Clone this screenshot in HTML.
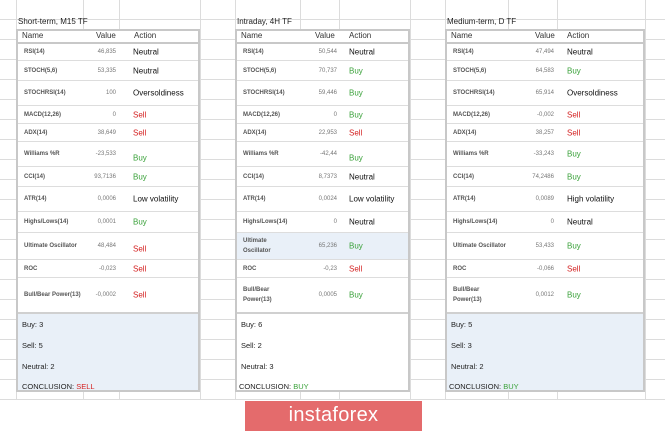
<!DOCTYPE html>
<html><head><meta charset="utf-8"><style>
body{margin:0;width:665px;height:432px;overflow:hidden;background:#fff;font-family:"Liberation Sans",sans-serif;position:relative}
.grid{position:absolute;left:0;top:0;width:665px;height:400px;background:repeating-linear-gradient(to bottom,transparent 0,transparent 19px,#dcdcdc 19px,#dcdcdc 20px)}
.v{position:absolute;top:0;height:400px;width:1px;background:#dcdcdc}
.p{position:absolute;top:29px;height:363px;background:#fff;border:2px solid #c8c8c8;box-sizing:border-box}
.t{position:absolute;font-size:8px;color:#222}
.h{position:absolute;left:0;right:0;top:0;height:11px;border-bottom:2px solid #c8c8c8;font-size:8px;color:#333}
.r{position:absolute;left:0;right:0;border-bottom:1px solid #ddd;font-size:6px;font-weight:bold;color:#555}
.r span{position:absolute;top:50%;transform:translateY(-50%)}
.val{font-weight:normal;color:#777;text-align:right}
.act{font-weight:normal;font-size:8px;color:#111}
.g{color:#3aa13a!important}.rd{color:#d42020!important}
.s{position:absolute;left:0;right:0;top:281px;bottom:0;font-size:7.5px;color:#222}
.s div{position:absolute;left:4px}
</style></head><body>
<div class="grid"></div>
<div class="v" style="left:16px"></div><div class="v" style="left:83px"></div><div class="v" style="left:119px"></div><div class="v" style="left:200px"></div><div class="v" style="left:235px"></div><div class="v" style="left:300px"></div><div class="v" style="left:339px"></div><div class="v" style="left:410px"></div><div class="v" style="left:445px"></div><div class="v" style="left:508px"></div><div class="v" style="left:557px"></div><div class="v" style="left:645px"></div>

<div class="t" style="left:18px;top:17px">Short-term, M15 TF</div>
<div class="t" style="left:237px;top:17px">Intraday, 4H TF</div>
<div class="t" style="left:447px;top:17px">Medium-term, D TF</div>

<!-- Panel 1 -->
<div class="p" style="left:16px;width:184px">
<div class="h"><span style="position:absolute;left:4px">Name</span><span style="position:absolute;left:78px">Value</span><span style="position:absolute;left:116px">Action</span></div>
<div class="r" style="top:12px;height:17px"><span style="left:6px">RSI(14)</span><span class="val" style="right:82px">46,835</span><span class="act" style="left:115px">Neutral</span></div>
<div class="r" style="top:30px;height:19px"><span style="left:6px">STOCH(5,6)</span><span class="val" style="right:82px">53,335</span><span class="act" style="left:115px">Neutral</span></div>
<div class="r" style="top:50px;height:24px"><span style="left:6px">STOCHRSI(14)</span><span class="val" style="right:82px">100</span><span class="act" style="left:115px">Oversoldiness</span></div>
<div class="r" style="top:75px;height:17px"><span style="left:6px">MACD(12,26)</span><span class="val" style="right:82px">0</span><span class="act rd" style="left:115px">Sell</span></div>
<div class="r" style="top:93px;height:17px"><span style="left:6px">ADX(14)</span><span class="val" style="right:82px">38,649</span><span class="act rd" style="left:115px">Sell</span></div>
<div class="r" style="top:111px;height:24px"><span style="left:6px">Williams %R</span><span class="val" style="right:82px">-23,533</span><span class="act g" style="left:115px;top:65%">Buy</span></div>
<div class="r" style="top:136px;height:19px"><span style="left:6px">CCI(14)</span><span class="val" style="right:82px">93,7136</span><span class="act g" style="left:115px">Buy</span></div>
<div class="r" style="top:156px;height:24px"><span style="left:6px">ATR(14)</span><span class="val" style="right:82px">0,0006</span><span class="act" style="left:115px">Low volatility</span></div>
<div class="r" style="top:181px;height:20px"><span style="left:6px">Highs/Lows(14)</span><span class="val" style="right:82px">0,0001</span><span class="act g" style="left:115px">Buy</span></div>
<div class="r" style="top:202px;height:26px"><span style="left:6px">Ultimate Oscillator</span><span class="val" style="right:82px">48,484</span><span class="act rd" style="left:115px;top:60%">Sell</span></div>
<div class="r" style="top:229px;height:17px"><span style="left:6px">ROC</span><span class="val" style="right:82px">-0,023</span><span class="act rd" style="left:115px">Sell</span></div>
<div class="r" style="top:247px;height:33px;border:0"><span style="left:6px">Bull/Bear Power(13)</span><span class="val" style="right:82px">-0,0002</span><span class="act rd" style="left:115px">Sell</span></div>
<div class="s" style="background:#e9f0f8;border-top:2px solid #d0d0d0"><div style="top:6px">Buy: 3</div><div style="top:27px">Sell: 5</div><div style="top:48px">Neutral: 2</div><div style="top:68px">CONCLUSION: <span class="rd">SELL</span></div></div>
</div>

<!-- Panel 2 -->
<div class="p" style="left:235px;width:175px">
<div class="h"><span style="position:absolute;left:4px">Name</span><span style="position:absolute;left:78px">Value</span><span style="position:absolute;left:112px">Action</span></div>
<div class="r" style="top:12px;height:17px"><span style="left:6px">RSI(14)</span><span class="val" style="right:71px">50,544</span><span class="act" style="left:112px">Neutral</span></div>
<div class="r" style="top:30px;height:19px"><span style="left:6px">STOCH(5,6)</span><span class="val" style="right:71px">70,737</span><span class="act g" style="left:112px">Buy</span></div>
<div class="r" style="top:50px;height:24px"><span style="left:6px">STOCHRSI(14)</span><span class="val" style="right:71px">59,446</span><span class="act g" style="left:112px">Buy</span></div>
<div class="r" style="top:75px;height:17px"><span style="left:6px">MACD(12,26)</span><span class="val" style="right:71px">0</span><span class="act g" style="left:112px">Buy</span></div>
<div class="r" style="top:93px;height:17px"><span style="left:6px">ADX(14)</span><span class="val" style="right:71px">22,953</span><span class="act rd" style="left:112px">Sell</span></div>
<div class="r" style="top:111px;height:24px"><span style="left:6px">Williams %R</span><span class="val" style="right:71px">-42,44</span><span class="act g" style="left:112px;top:65%">Buy</span></div>
<div class="r" style="top:136px;height:19px"><span style="left:6px">CCI(14)</span><span class="val" style="right:71px">8,7373</span><span class="act" style="left:112px">Neutral</span></div>
<div class="r" style="top:156px;height:24px"><span style="left:6px">ATR(14)</span><span class="val" style="right:71px">0,0024</span><span class="act" style="left:112px">Low volatility</span></div>
<div class="r" style="top:181px;height:20px"><span style="left:6px">Highs/Lows(14)</span><span class="val" style="right:71px">0</span><span class="act" style="left:112px">Neutral</span></div>
<div class="r" style="top:202px;height:26px;background:#e9f0f8"><span style="left:6px;line-height:10px">Ultimate<br>Oscillator</span><span class="val" style="right:71px">65,236</span><span class="act g" style="left:112px">Buy</span></div>
<div class="r" style="top:229px;height:17px"><span style="left:6px">ROC</span><span class="val" style="right:71px">-0,23</span><span class="act rd" style="left:112px">Sell</span></div>
<div class="r" style="top:247px;height:33px;border:0"><span style="left:6px;line-height:10px">Bull/Bear<br>Power(13)</span><span class="val" style="right:71px">0,0005</span><span class="act g" style="left:112px">Buy</span></div>
<div class="s" style="border-top:2px solid #d0d0d0"><div style="top:6px">Buy: 6</div><div style="top:27px">Sell: 2</div><div style="top:48px">Neutral: 3</div><div style="top:68px;left:2px">CONCLUSION: <span class="g">BUY</span></div></div>
</div>

<!-- Panel 3 -->
<div class="p" style="left:445px;width:200px">
<div class="h"><span style="position:absolute;left:4px">Name</span><span style="position:absolute;left:88px">Value</span><span style="position:absolute;left:120px">Action</span></div>
<div class="r" style="top:12px;height:17px"><span style="left:6px">RSI(14)</span><span class="val" style="right:89px">47,494</span><span class="act" style="left:120px">Neutral</span></div>
<div class="r" style="top:30px;height:19px"><span style="left:6px">STOCH(5,6)</span><span class="val" style="right:89px">64,583</span><span class="act g" style="left:120px">Buy</span></div>
<div class="r" style="top:50px;height:24px"><span style="left:6px">STOCHRSI(14)</span><span class="val" style="right:89px">65,914</span><span class="act" style="left:120px">Oversoldiness</span></div>
<div class="r" style="top:75px;height:17px"><span style="left:6px">MACD(12,26)</span><span class="val" style="right:89px">-0,002</span><span class="act rd" style="left:120px">Sell</span></div>
<div class="r" style="top:93px;height:17px"><span style="left:6px">ADX(14)</span><span class="val" style="right:89px">38,257</span><span class="act rd" style="left:120px">Sell</span></div>
<div class="r" style="top:111px;height:24px"><span style="left:6px">Williams %R</span><span class="val" style="right:89px">-33,243</span><span class="act g" style="left:120px">Buy</span></div>
<div class="r" style="top:136px;height:19px"><span style="left:6px">CCI(14)</span><span class="val" style="right:89px">74,2486</span><span class="act g" style="left:120px">Buy</span></div>
<div class="r" style="top:156px;height:24px"><span style="left:6px">ATR(14)</span><span class="val" style="right:89px">0,0089</span><span class="act" style="left:120px">High volatility</span></div>
<div class="r" style="top:181px;height:20px"><span style="left:6px">Highs/Lows(14)</span><span class="val" style="right:89px">0</span><span class="act" style="left:120px">Neutral</span></div>
<div class="r" style="top:202px;height:26px"><span style="left:6px">Ultimate Oscillator</span><span class="val" style="right:89px">53,433</span><span class="act g" style="left:120px">Buy</span></div>
<div class="r" style="top:229px;height:17px"><span style="left:6px">ROC</span><span class="val" style="right:89px">-0,066</span><span class="act rd" style="left:120px">Sell</span></div>
<div class="r" style="top:247px;height:33px;border:0"><span style="left:6px;line-height:10px">Bull/Bear<br>Power(13)</span><span class="val" style="right:89px">0,0012</span><span class="act g" style="left:120px">Buy</span></div>
<div class="s" style="background:#e9f0f8;border-top:2px solid #d0d0d0"><div style="top:6px">Buy: 5</div><div style="top:27px">Sell: 3</div><div style="top:48px">Neutral: 2</div><div style="top:68px;left:2px">CONCLUSION: <span class="g">BUY</span></div></div>
</div>

<div style="position:absolute;left:245px;top:401px;width:177px;height:30px;background:#e46b6c;color:#fff;font-size:20px;text-align:center;line-height:29px;letter-spacing:0.3px">instaforex</div>
</body></html>
